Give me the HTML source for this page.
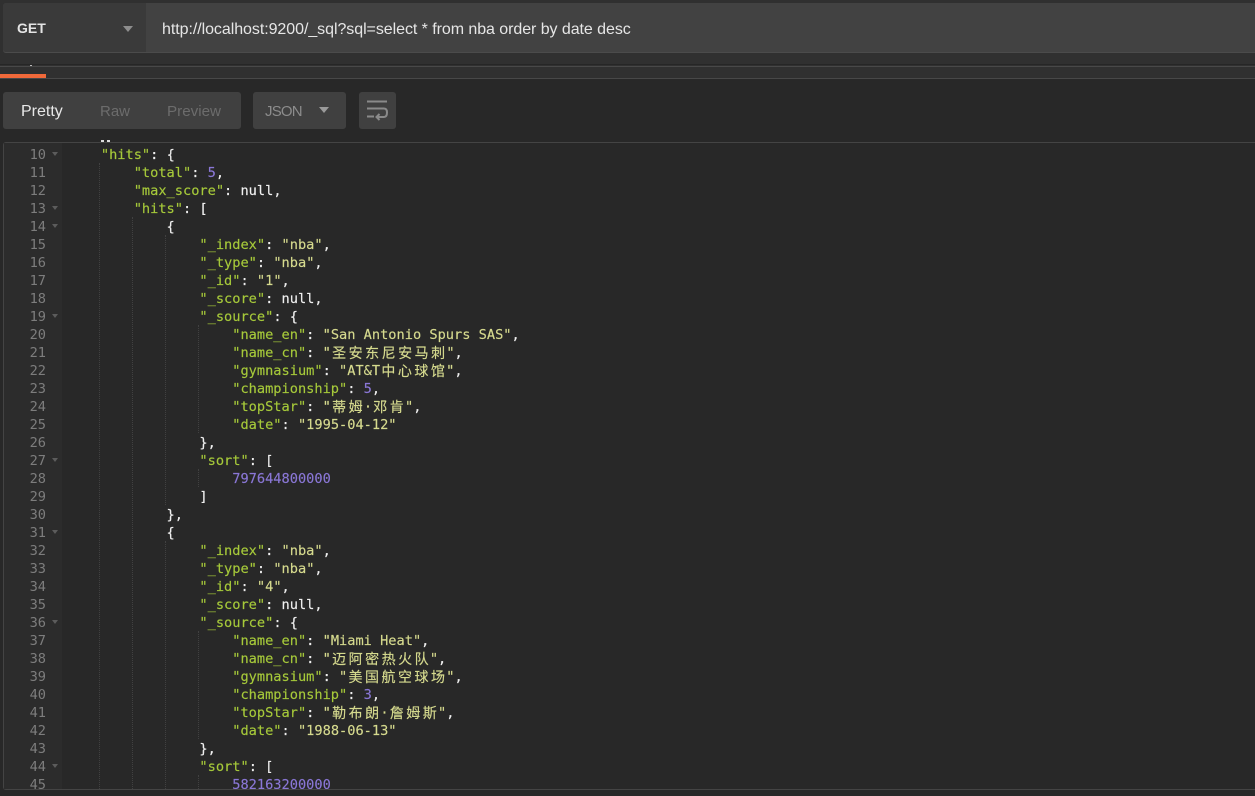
<!DOCTYPE html>
<html><head><meta charset="utf-8">
<style>
html,body{margin:0;padding:0;background:#282828;width:1255px;height:796px;overflow:hidden}
body{position:relative;font-family:"Liberation Sans",sans-serif}
.a{position:absolute}
#code{position:absolute;left:68px;margin:0;font:13.65px/18px "DejaVu Sans Mono","Noto Sans CJK SC",monospace;color:#f0f0f0;white-space:pre;-webkit-text-stroke:.15px}
.k{color:#a6c93a}.s{color:#d6da8e}.n{color:#8a77d6}
.c{display:inline-block;width:16.5px;font:14px/18px "Noto Sans CJK SC",sans-serif;text-align:center;vertical-align:top;color:#d6da8e}
#nums{position:absolute;left:3px;width:43px;top:146px;text-align:right;font:13.65px/18px "DejaVu Sans Mono",monospace;color:#7d7d7d;white-space:pre}
.f{position:absolute;left:52px;width:0;height:0;border:3.5px solid transparent;border-top:4px solid #5c5c5c;border-bottom:0}
.g{position:absolute;width:0;border-left:1px dotted #414141}
</style></head><body>
<div class="a" style="left:0;top:0;width:1255px;height:78px;background:#303030"></div>
<div class="a" style="left:3px;top:3px;width:1252px;height:49px;background:#424242;border-bottom:1px solid #4b4b4b;border-radius:3px 0 0 3px"></div>
<div class="a" style="left:3px;top:3px;width:143px;height:49px;background:#3a3a3a;border-radius:3px 0 0 3px"></div>
<div class="a" style="left:17px;top:20px;font-size:14px;font-weight:bold;line-height:17px;color:#e4e4e4">GET</div>
<div class="a" style="left:123px;top:26px;width:0;height:0;border:5px solid transparent;border-top:6px solid #8d8d8d;border-bottom:0"></div>
<div class="a" style="left:162px;top:19.500px;font-size:16px;line-height:19px;color:#e6e6e6;white-space:pre;letter-spacing:-.06px">http://localhost:9200/_sql?sql=select * from nba order by date desc</div>
<div class="a" style="left:0;top:64px;width:1255px;height:1px;background:#262626"></div>
<div class="a" style="left:0;top:66px;width:1255px;height:1px;background:#484848"></div>
<div class="a" style="left:30px;top:65px;width:2px;height:1px;background:#bbb"></div>
<div class="a" style="left:0;top:78px;width:1255px;height:1px;background:#484848"></div>
<div class="a" style="left:0;top:74px;width:46px;height:4px;background:#f0693a"></div>

<div class="a" style="left:3px;top:92px;width:238px;height:37px;background:#404040;border-radius:3px"></div>
<div class="a" style="left:21px;top:103px;font-size:16px;line-height:18px;color:#e8e8e8">Pretty</div>
<div class="a" style="left:100px;top:103px;font-size:15px;line-height:18px;color:#6c6c6c">Raw</div>
<div class="a" style="left:167px;top:103px;font-size:15.200px;line-height:18px;color:#6c6c6c">Preview</div>
<div class="a" style="left:253px;top:92px;width:93px;height:37px;background:#404040;border-radius:3px"></div>
<div class="a" style="left:265px;top:103px;font-size:15px;line-height:18px;color:#8c8c8c;letter-spacing:-.8px">JSON</div>
<div class="a" style="left:319px;top:107px;width:0;height:0;border:5px solid transparent;border-top:6px solid #9a9a9a;border-bottom:0"></div>
<div class="a" style="left:359px;top:92px;width:37px;height:37px;background:#404040;border-radius:3px"></div>
<svg class="a" style="left:359px;top:92px" width="37" height="37" viewBox="0 0 37 37" fill="none" stroke="#8a8a8a" stroke-width="2"><path d="M8 9.500H28M8 16.500H25Q28 16.500 28 20.500Q28 25 25 25H18M20.500 22L17.500 25L20.500 28M8 24.500H15"/></svg>

<div class="a" style="left:3px;top:142px;width:1252px;height:648px;background:#282828;border-top:1px solid #444;border-left:1px solid #444;border-bottom:1px solid #444;border-radius:3px 0 0 3px;box-sizing:border-box"></div>
<div class="a" style="left:4px;top:143px;width:58px;height:646px;background:#2c2c2c"></div>
<div class="a" style="left:101px;top:140px;width:3px;height:2px;background:#ddd"></div>
<div class="a" style="left:107px;top:140px;width:3px;height:2px;background:#ddd"></div>

<div class="g" style="left:99px;top:163px;height:626px"></div>
<div class="g" style="left:132px;top:217px;height:572px"></div>
<div class="g" style="left:165px;top:235px;height:270px"></div>
<div class="g" style="left:165px;top:541px;height:248px"></div>
<div class="g" style="left:198px;top:325px;height:108px"></div>
<div class="g" style="left:198px;top:469px;height:18px"></div>
<div class="g" style="left:198px;top:631px;height:108px"></div>
<div class="g" style="left:198px;top:775px;height:14px"></div>

<div id="nums">10
11
12
13
14
15
16
17
18
19
20
21
22
23
24
25
26
27
28
29
30
31
32
33
34
35
36
37
38
39
40
41
42
43
44
45</div>
<i class="f" style="top:152px"></i><i class="f" style="top:206px"></i><i class="f" style="top:224px"></i><i class="f" style="top:314px"></i><i class="f" style="top:458px"></i><i class="f" style="top:530px"></i><i class="f" style="top:620px"></i><i class="f" style="top:764px"></i>

<div class="a" style="left:0;top:143px;width:1255px;height:646px;overflow:hidden">
<pre id="code" style="top:3px;margin:0">    <span class="k">"hits"</span>: {
        <span class="k">"total"</span>: <span class="n">5</span>,
        <span class="k">"max_score"</span>: null,
        <span class="k">"hits"</span>: [
            {
                <span class="k">"_index"</span>: <span class="s">"nba"</span>,
                <span class="k">"_type"</span>: <span class="s">"nba"</span>,
                <span class="k">"_id"</span>: <span class="s">"1"</span>,
                <span class="k">"_score"</span>: null,
                <span class="k">"_source"</span>: {
                    <span class="k">"name_en"</span>: <span class="s">"San Antonio Spurs SAS"</span>,
                    <span class="k">"name_cn"</span>: <span class="s">"<span class="c">圣</span><span class="c">安</span><span class="c">东</span><span class="c">尼</span><span class="c">安</span><span class="c">马</span><span class="c">刺</span>"</span>,
                    <span class="k">"gymnasium"</span>: <span class="s">"AT&amp;T<span class="c">中</span><span class="c">心</span><span class="c">球</span><span class="c">馆</span>"</span>,
                    <span class="k">"championship"</span>: <span class="n">5</span>,
                    <span class="k">"topStar"</span>: <span class="s">"<span class="c">蒂</span><span class="c">姆</span>·<span class="c">邓</span><span class="c">肯</span>"</span>,
                    <span class="k">"date"</span>: <span class="s">"1995-04-12"</span>
                },
                <span class="k">"sort"</span>: [
                    <span class="n">797644800000</span>
                ]
            },
            {
                <span class="k">"_index"</span>: <span class="s">"nba"</span>,
                <span class="k">"_type"</span>: <span class="s">"nba"</span>,
                <span class="k">"_id"</span>: <span class="s">"4"</span>,
                <span class="k">"_score"</span>: null,
                <span class="k">"_source"</span>: {
                    <span class="k">"name_en"</span>: <span class="s">"Miami Heat"</span>,
                    <span class="k">"name_cn"</span>: <span class="s">"<span class="c">迈</span><span class="c">阿</span><span class="c">密</span><span class="c">热</span><span class="c">火</span><span class="c">队</span>"</span>,
                    <span class="k">"gymnasium"</span>: <span class="s">"<span class="c">美</span><span class="c">国</span><span class="c">航</span><span class="c">空</span><span class="c">球</span><span class="c">场</span>"</span>,
                    <span class="k">"championship"</span>: <span class="n">3</span>,
                    <span class="k">"topStar"</span>: <span class="s">"<span class="c">勒</span><span class="c">布</span><span class="c">朗</span>·<span class="c">詹</span><span class="c">姆</span><span class="c">斯</span>"</span>,
                    <span class="k">"date"</span>: <span class="s">"1988-06-13"</span>
                },
                <span class="k">"sort"</span>: [
                    <span class="n">582163200000</span></pre>
</div>
</body></html>
